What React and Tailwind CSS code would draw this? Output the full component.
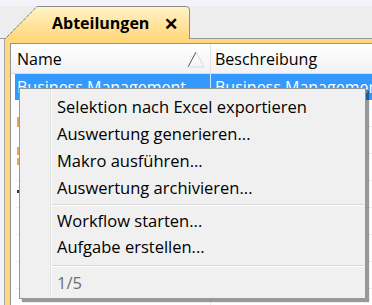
import React from 'react'

const menuItems = [
  ['Selektion nach Excel exportieren', 'Auswertung generieren...', 'Makro ausführen...', 'Auswertung archivieren...'],
  ['Workflow starten...', 'Aufgabe erstellen...'],
]

// little bits of row text that peek out left of the context menu
const rows = [
  { mark: 'mt-[17px] h-[10px] bg-[#e9a35a]' },
  { mark: 'mt-[20px] h-[8px] bg-[#e9a35a]' },
  { mark: 'mt-[4px] h-[7px] bg-[#e9a35a]' },
  { mark: 'mt-[9px] h-[3px] w-[4px] bg-[#333]' },
  {},
  {},
  {},
  {},
]

function Tab() {
  return (
    <div className="relative w-[185px] h-[33px] -mb-px z-10">
      <svg className="absolute inset-0" width="185" height="33" viewBox="0 0 185 33">
        <defs>
          <linearGradient id="tabfill" x1="0" y1="0" x2="0" y2="1">
            <stop offset="0" stopColor="#fff4c8" />
            <stop offset="1" stopColor="#ffd77c" />
          </linearGradient>
        </defs>
        <path d="M0 33 L32 0.5 L181 0.5 Q184.5 0.5 184.5 4 L184.5 33 Z" fill="url(#tabfill)" />
        <path d="M32 0.5 L181 0.5 Q184.5 0.5 184.5 4 L184.5 33" fill="none" stroke="#8c8c8c" strokeWidth="1" />
        <path d="M0.5 32.5 L32 0.5" fill="none" stroke="#3c3c3c" strokeWidth="1" strokeDasharray="1 1" />
      </svg>
      <div className="relative flex items-center h-full pl-[47px] pt-[1px]">
        <span className="text-[16px] font-bold text-black leading-none">Abteilungen</span>
        <span className="ml-[15px] text-[17px] font-bold text-black leading-none">✕</span>
      </div>
    </div>
  )
}

function ContextMenu() {
  return (
    <div className="absolute left-[19px] top-[88px] w-[347px] h-[211px] bg-[#f0f0f0] border border-[#979797] shadow-[3px_3px_1px_rgba(0,0,0,0.4)]">
      <div className="absolute left-[30px] top-0 bottom-0 w-[2px] border-l border-[#e2e3e3] bg-white/70" />
      <div className="relative pt-[5px] pl-[37px]">
        {menuItems[0].map((t) => (
          <div key={t} className="h-[27px] flex items-center text-[16.5px] text-black">{t}</div>
        ))}
        <Sep top="pt-[2px]" bottom="pb-[2px]" />
        {menuItems[1].map((t) => (
          <div key={t} className="h-[26px] flex items-center text-[16.5px] text-black">{t}</div>
        ))}
        <Sep top="pt-[5px]" bottom="pb-[3px]" />
        <div className="h-[26px] flex items-center text-[16.5px] text-[#6d6d6d]">1/5</div>
      </div>
    </div>
  )
}

function Sep({ top, bottom }) {
  return (
    <div className={`-ml-[5px] mr-[1px] ${top} ${bottom}`}>
      <div className="h-px bg-[#d7d7d7]" />
      <div className="h-px bg-white" />
    </div>
  )
}

export default function App() {
  return (
    <div className="relative w-[372px] h-[305px] overflow-hidden bg-[#f3f3f9] font-['Open_Sans','Noto_Sans',sans-serif]">
      <div className="h-[6px]" />
      <div className="flex items-end h-[33px] pl-[5px] bg-[#ededed] border-b border-[#9a9a9a]">
        <Tab />
      </div>
      <div className="ml-[4px] h-[266px] border-l border-[#a8a8a8] bg-[#ffd87e] pl-[5px] pt-[4px]">
        <div className="h-full border-l border-t border-[#8e9299] bg-white">
          <div className="flex h-[30px] bg-gradient-to-b from-white to-[#f1f2f4] border-b border-[#d9dadc]">
            <div className="relative w-[200px] flex items-center pl-[6px] border-r border-[#e3e4e6] text-[16px] text-black">
              Name
              <svg className="absolute left-[176px] top-[7px]" width="18" height="17" viewBox="0 0 18 17">
                <path d="M1 16 L9 1" stroke="#555" strokeWidth="1" fill="none" />
                <path d="M9 1 L17 16 L1 16" stroke="#dadada" strokeWidth="1" fill="none" />
              </svg>
            </div>
            <div className="flex items-center pl-[4px] text-[16px] text-black">Beschreibung</div>
          </div>
          <div className="pl-[4px]">
            <div className="flex h-[26px] bg-[#3399ff] text-white text-[16px] whitespace-nowrap overflow-hidden">
              <div className="w-[196px] shrink-0 pl-[2px] pt-[1px] border-r border-[#cfe6ff] overflow-hidden">Business Management</div>
              <div className="pl-[4px] pt-[1px]">Business Management</div>
            </div>
            {rows.map((r, i) => (
              <div key={i} className="flex h-[27px] border-b border-[#eeeeee]">
                <div className="w-[196px] shrink-0 pl-[2px] border-r border-[#eeeeee]">
                  {r.mark && <div className={`w-[2px] ${r.mark}`} />}
                </div>
                <div />
              </div>
            ))}
          </div>
        </div>
      </div>
      <ContextMenu />
    </div>
  )
}
